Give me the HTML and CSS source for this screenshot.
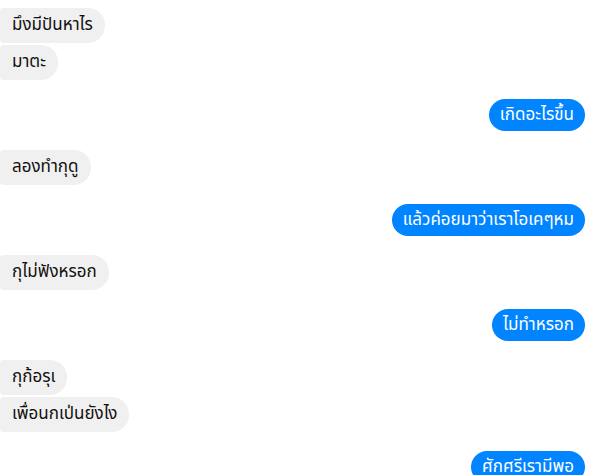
FILE: index.html
```html
<!DOCTYPE html>
<html lang="th">
<head>
    <meta charset="UTF-8">
    <meta name="viewport" content="width=device-width, initial-scale=1.0">
    <title>แชท</title>
    <link rel="stylesheet" href="styles.css">
</head>
<body>
    <div class="chat">
        <div class="group in">
            <div class="bubble">มึงมีปันหาไร</div>
            <div class="bubble">มาตะ</div>
        </div>
        <div class="group out">
            <div class="bubble">เกิดอะไรขึ้น</div>
        </div>
        <div class="group in">
            <div class="bubble">ลองทำกุดู</div>
        </div>
        <div class="group out">
            <div class="bubble">แล้วค่อยมาว่าเราโอเคๆหม</div>
        </div>
        <div class="group in">
            <div class="bubble">กุไม่ฟังหรอก</div>
        </div>
        <div class="group out">
            <div class="bubble">ไม่ทำหรอก</div>
        </div>
        <div class="group in">
            <div class="bubble">กุก้อรุเ</div>
            <div class="bubble">เพื่อนกเป่นยังไง</div>
        </div>
        <div class="group out">
            <div class="bubble">ศักศรีเรามีพอ</div>
        </div>
    </div>
</body>
</html>
```

FILE: styles.css
```css
body {
    margin: 0;
    background-color: #ffffff;
    font-family: Tahoma, "Noto Sans Thai", "Noto Sans", sans-serif;
    font-size: 17px;
    color: #111;
}

.chat {
    display: flex;
    flex-direction: column;
    gap: 19px;
    padding: 8px 22px 0 0;
}

.group {
    display: flex;
    flex-direction: column;
    gap: 2px;
}

.group.in {
    align-items: flex-start;
}

.group.out {
    align-items: flex-end;
}

.bubble {
    line-height: 21px;
    padding: 7px 12px;
    border-radius: 17px;
    white-space: nowrap;
}

.in .bubble {
    background-color: #f0f0f0;
    border-radius: 4px 17px 17px 4px;
}

.out .bubble {
    background-color: #0084ff;
    color: #ffffff;
    line-height: 20px;
    padding: 6px 11px;
}
```
